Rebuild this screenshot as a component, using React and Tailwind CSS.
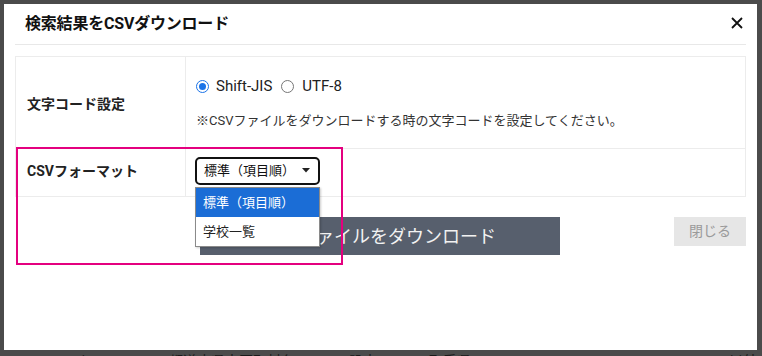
import React from "react";

function Radio({ checked }) {
  return checked ? (
    <span className="inline-flex h-[13px] w-[13px] items-center justify-center rounded-full border-[1.5px] border-[#1a73e8] bg-white">
      <span className="h-[7px] w-[7px] rounded-full bg-[#1a73e8]" />
    </span>
  ) : (
    <span className="inline-block h-[13px] w-[13px] rounded-full border border-[#767676] bg-white" />
  );
}

export default function App() {
  return (
    <div
      className="flex h-[356px] w-[762px] flex-col overflow-hidden bg-[#4b4b4b] px-[4px] pt-[4px]"
      style={{ fontFamily: 'Roboto, "Noto Sans CJK JP", sans-serif' }}
    >
      <div className="relative h-[346px] w-[753px] shrink-0 bg-white text-[#222]">
        {/* header */}
        <div className="mx-[11px] flex h-[41px] items-center justify-between border-b border-[#e8e8e8] pl-[10px] pr-[3px]">
          <h1 className="text-[16px] font-bold tracking-[-0.2px] text-[#111]">検索結果をCSVダウンロード</h1>
          <svg width="12" height="12" viewBox="0 0 12 12" className="mb-[2px]">
            <path d="M1 1L11 11M11 1L1 11" stroke="#111" strokeWidth="1.8" />
          </svg>
        </div>

        {/* table */}
        <div className="mx-[11px] mt-[11px] border border-[#ececec]">
          <div className="flex h-[92px] border-b border-[#ececec]">
            <div className="flex w-[170px] items-center border-r border-[#ececec] pl-[11px] pt-[4px] text-[14px] font-bold">
              文字コード設定
            </div>
            <div className="flex flex-col pl-[10px] pt-[19px]">
              <div className="flex h-[20px] items-center text-[15px] text-[#222]">
                <Radio checked />
                <span className="ml-[7px]">Shift-JIS</span>
                <span className="ml-[9px] flex"><Radio /></span>
                <span className="ml-[8px]">UTF-8</span>
              </div>
              <div className="mt-[15px] text-[13px] text-[#333]">
                ※CSVファイルをダウンロードする時の文字コードを設定してください。
              </div>
            </div>
          </div>
          <div className="flex h-[47px]">
            <div className="flex w-[170px] items-center border-r border-[#ececec] pl-[11px] pb-[2px] text-[14px] font-bold">
              CSVフォーマット
            </div>
            <div className="relative flex items-center pl-[9px] pb-[4px]">
              <div className="flex h-[28px] w-[125px] items-center justify-between rounded-[5px] border-2 border-[#111] bg-white pl-[7px] pr-[8px] text-[13px] text-[#111]">
                <span>標準（項目順）</span>
                <svg width="8" height="5" viewBox="0 0 8 5">
                  <path d="M0 0H8L4 4.5Z" fill="#222" />
                </svg>
              </div>
              {/* dropdown menu */}
              <div className="absolute left-[9px] top-[38px] z-20 w-[125px] border border-[#8a8a8a] bg-white text-[13px] shadow-[1px_1px_2px_rgba(0,0,0,0.2)]">
                <div className="flex h-[29px] items-center bg-[#1b6dd6] pl-[7px] text-white">標準（項目順）</div>
                <div className="flex h-[29px] items-center pl-[7px] text-[#222]">学校一覧</div>
              </div>
            </div>
          </div>
        </div>

        {/* buttons */}
        <div className="mx-[11px] mt-[20px] flex items-start">
          <div className="w-[185px]" />
          <div className="flex h-[38px] w-[360px] items-center justify-center bg-[#575f6d] text-[18px] text-[#f2f2f2]">
            CSVファイルをダウンロード
          </div>
          <div className="flex-1" />
          <div className="flex h-[29px] w-[72px] items-center justify-center bg-[#e6e6e6] text-[14px] text-[#9a9a9a]">
            閉じる
          </div>
        </div>

        {/* annotation */}
        <div className="pointer-events-none absolute left-[12px] top-[143px] z-30 h-[118px] w-[327px] border-2 border-[#e4007f]" />
      </div>
      <div className="flex h-[20px] shrink-0 items-start pt-[1px] text-[14px] leading-[20px] text-[#1a1a1a]">
        <span className="ml-[1px] w-[160px]">wwwwwww/uuuuuuu</span>
        <span className="ml-[4px] w-[180px]">都道府県市区町村名</span>
        <span className="ml-[0px] w-[80px]">設定</span>
        <span className="ml-[0px] w-[300px]">取手県</span>
        <span>以外</span>
      </div>
    </div>
  );
}
